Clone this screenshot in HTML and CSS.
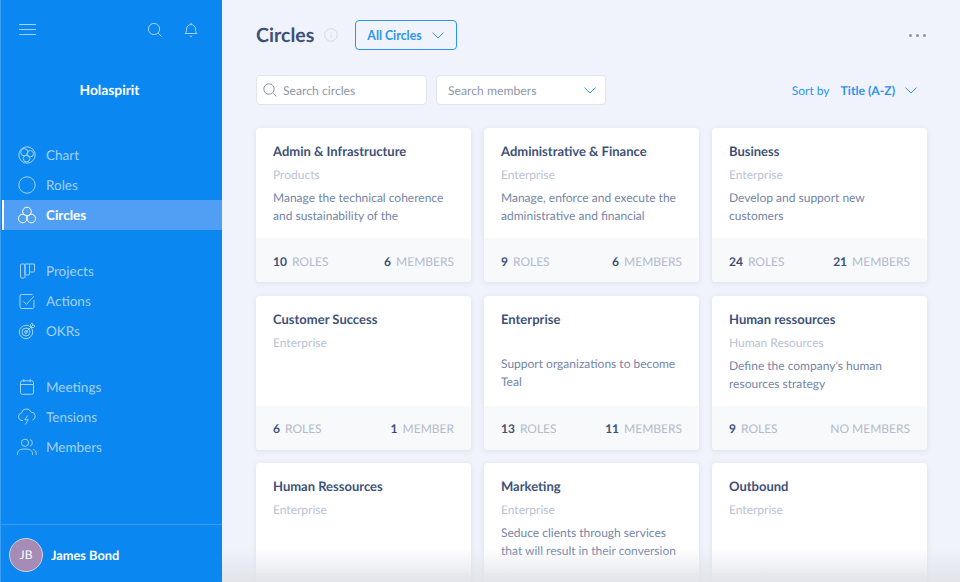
FILE: index.html
```html
<!DOCTYPE html>
<html lang="en">
<head>
<meta charset="utf-8">
<title>Circles</title>
<link rel="stylesheet" href="styles.css">
</head>
<body>
<div class="app">
  <aside class="sidebar">
    <div class="side-top">
      <svg class="ic-menu" width="18" height="12" viewBox="0 0 18 12"><path d="M0 .5h17M0 5.500h17M0 10.500h17"/></svg>
      <div class="side-tools">
        <svg width="16" height="16" viewBox="0 0 16 16"><circle cx="7" cy="7" r="5.600"/><path d="M11 11l3.600 3.600"/></svg>
        <svg width="14" height="16" viewBox="0 0 14 16"><path d="M1 11.500c1.200-1 1.500-2 1.500-4.500C2.500 4.500 4.500 2.500 7 2.500s4.500 2 4.500 4.500c0 2.500.3 3.500 1.500 4.500zM7 .8v1.700M5.800 14.300h2.400"/></svg>
      </div>
    </div>
    <div class="brand">Holaspirit</div>
    <nav class="nav">
      <div class="nav-group">
        <a class="nav-item"><svg width="20" height="20" viewBox="0 0 20 20"><circle cx="10" cy="10" r="8.200"/><circle cx="7.300" cy="7.200" r="3.600"/><circle cx="13.300" cy="8.700" r="3.200"/><circle cx="9.500" cy="13.600" r="3.300"/></svg>Chart</a>
        <a class="nav-item"><svg width="20" height="20" viewBox="0 0 20 20"><circle cx="10" cy="10" r="8.200"/></svg>Roles</a>
        <a class="nav-item active"><svg width="20" height="20" viewBox="0 0 20 20"><circle cx="10" cy="6.500" r="4.300"/><circle cx="5.700" cy="13.500" r="4.300"/><circle cx="14.300" cy="13.500" r="4.300"/></svg>Circles</a>
      </div>
      <div class="nav-group">
        <a class="nav-item"><svg width="20" height="20" viewBox="0 0 20 20"><rect x="3.500" y="3" width="4.500" height="14" rx="1"/><path d="M8 3h4.500v10a1 1 0 0 1-1 1h-2.500a1 1 0 0 1-1-1zM12.500 3h5v7a1 1 0 0 1-1 1h-3a1 1 0 0 1-1-1z"/></svg>Projects</a>
        <a class="nav-item"><svg width="20" height="20" viewBox="0 0 20 20"><path d="M17 9v7a1.500 1.500 0 0 1-1.500 1.500h-11a1.500 1.500 0 0 1-1.500-1.500v-11a1.500 1.500 0 0 1 1.500-1.500h11"/><path d="M6.500 10.500l3 2.800 7.500-8.300"/></svg>Actions</a>
        <a class="nav-item"><svg width="20" height="20" viewBox="0 0 20 20"><circle cx="9" cy="11" r="6.700"/><circle cx="9" cy="11" r="4"/><circle cx="9" cy="11" r="1.400"/><path d="M9 11l7-7M13.500 3.500l1.500-1.500 1 2 2 1-1.500 1.500h-2.500z"/></svg>OKRs</a>
      </div>
      <div class="nav-group">
        <a class="nav-item"><svg width="20" height="20" viewBox="0 0 20 20"><rect x="3.500" y="3.800" width="13" height="13.500" rx="2"/><path d="M3.500 7.500h13M6.800 2v3M13.200 2v3"/></svg>Meetings</a>
        <a class="nav-item"><svg width="20" height="20" viewBox="0 0 20 20"><path d="M6 13.500h-1a3.800 3.800 0 0 1-.5-7.500 5 5 0 0 1 9.600-.8 4 4 0 0 1 1.400 7.800"/><path d="M10.800 8.500l-3 4.200h3.500l-3 4.800"/></svg>Tensions</a>
        <a class="nav-item"><svg width="20" height="20" viewBox="0 0 20 20"><circle cx="8" cy="5.800" r="3.600"/><path d="M.5 18v-1.500c0-2.800 2.500-4.500 7.500-4.500s7.500 1.700 7.500 4.500v1.500M13 2.500a3.500 3.500 0 0 1 0 6.600M16 12.300c2 .6 3.200 2 3.200 4v1.700"/></svg>Members</a>
      </div>
    </nav>
    <div class="user">
      <span class="avatar">JB</span>
      <span class="user-name">James Bond</span>
    </div>
  </aside>

  <main class="main">
    <header class="head">
      <h1 class="title">Circles</h1>
      <svg class="info" width="14" height="14" viewBox="0 0 14 14"><circle cx="7" cy="7" r="6.300"/><path d="M7 6.300v3.600M7 4v.9"/></svg>
      <button class="filter">All Circles
        <svg width="12" height="7" viewBox="0 0 12 7"><path d="M.5.700L6 6l5.500-5.300"/></svg>
      </button>
      <div class="dots"><i></i><i></i><i></i></div>
    </header>

    <div class="toolbar">
      <div class="field search">
        <svg width="14" height="14" viewBox="0 0 14 14"><circle cx="6" cy="6" r="5.200"/><path d="M9.800 9.800l3.600 3.600"/></svg>
        <span>Search circles</span>
      </div>
      <div class="field members">
        <span>Search members</span>
        <svg width="12" height="7" viewBox="0 0 12 7"><path d="M.5.700L6 6l5.500-5.300"/></svg>
      </div>
      <div class="sort">
        <span class="sort-label">Sort by</span>
        <span class="sort-value">Title (A-Z)</span>
        <svg width="12" height="7" viewBox="0 0 12 7"><path d="M.5.700L6 6l5.500-5.300"/></svg>
      </div>
    </div>

    <section class="grid">
      <article class="card">
        <div class="body"><h2>Admin &amp; Infrastructure</h2><p class="parent">Products</p><p class="desc">Manage the technical coherence and sustainability of the</p></div>
        <div class="foot"><span><b>10</b>ROLES</span><span><b>6</b>MEMBERS</span></div>
      </article>
      <article class="card">
        <div class="body"><h2>Administrative &amp; Finance</h2><p class="parent">Enterprise</p><p class="desc">Manage, enforce and execute the administrative and financial</p></div>
        <div class="foot"><span><b>9</b>ROLES</span><span><b>6</b>MEMBERS</span></div>
      </article>
      <article class="card">
        <div class="body"><h2>Business</h2><p class="parent">Enterprise</p><p class="desc">Develop and support new customers</p></div>
        <div class="foot"><span><b>24</b>ROLES</span><span><b>21</b>MEMBERS</span></div>
      </article>
      <article class="card">
        <div class="body"><h2>Customer Success</h2><p class="parent">Enterprise</p></div>
        <div class="foot"><span><b>6</b>ROLES</span><span><b>1</b>MEMBER</span></div>
      </article>
      <article class="card">
        <div class="body"><h2>Enterprise</h2><p class="parent empty"></p><p class="desc">Support organizations to become Teal</p></div>
        <div class="foot"><span><b>13</b>ROLES</span><span><b>11</b>MEMBERS</span></div>
      </article>
      <article class="card">
        <div class="body"><h2>Human ressources</h2><p class="parent">Human Resources</p><p class="desc">Define the company's human resources strategy</p></div>
        <div class="foot"><span><b>9</b>ROLES</span><span>NO MEMBERS</span></div>
      </article>
      <article class="card">
        <div class="body"><h2>Human Ressources</h2><p class="parent">Enterprise</p></div>
        <div class="foot"></div>
      </article>
      <article class="card">
        <div class="body"><h2>Marketing</h2><p class="parent">Enterprise</p><p class="desc">Seduce clients through services that will result in their conversion</p></div>
        <div class="foot"></div>
      </article>
      <article class="card">
        <div class="body"><h2>Outbound</h2><p class="parent">Enterprise</p></div>
        <div class="foot"></div>
      </article>
    </section>
    <div class="fade"></div>
  </main>
</div>
</body>
</html>
```
FILE: styles.css
```css
* { box-sizing: border-box; }
html, body { margin: 0; height: 100%; overflow: hidden; }
body { font-family: Lato, sans-serif; background: #f0f3fb; color: #3d5176; text-rendering: geometricPrecision; }
svg { fill: none; stroke: currentColor; stroke-width: 1; flex: none; display: block; }

.app { display: flex; height: 582px; }

.sidebar {
  width: 222px; flex: none; height: 582px;
  background: #0a87f1; border-left: 1px solid #3b9ef3;
  display: flex; flex-direction: column; color: #a6d2fa;
}
.side-top { display: flex; justify-content: space-between; align-items: center; padding: 23px 24px 0 18px; height: 36px; }
.side-tools { display: flex; gap: 21px; align-items: center; }
.brand { margin-top: 36px; height: 36px; line-height: 36px; text-align: center; color: #fff; font-weight: 700; font-size: 13.800px; padding-right: 4px; }
.nav { margin-top: 32px; display: flex; flex-direction: column; gap: 26px; flex: 1; }
.nav-item { display: flex; align-items: center; height: 30px; padding-left: 16px; gap: 9px; font-size: 13.500px; color: #a6d2fa; }
.nav-item.active { background: #519ff5; color: #fff; font-weight: 700; border-left: 2px solid #fff; margin-left: 1px; padding-left: 13px; }
.user { height: 58px; border-top: 1px solid #3b9ef3; display: flex; align-items: center; padding: 2px 8px 0; gap: 8px; }
.avatar {
  width: 34px; height: 34px; border-radius: 50%; background: #a58bb5; border: 1px solid #d6cfe2;
  color: #fff; font-size: 12px; display: flex; align-items: center; justify-content: center;
}
.user-name { color: #fff; font-weight: 700; font-size: 12.800px; }

.main { flex: 1; min-width: 0; padding: 20px 33px 0 34px; position: relative; overflow: hidden; }
.head { display: flex; align-items: center; height: 30px; }
.title { margin: 0; font-size: 19.600px; font-weight: 700; color: #3d5176; }
.info { margin-left: 10px; color: #d3d9e7; }
.filter {
  margin-left: 17px; width: 102px; height: 30px; border: 1px solid #2b94f2; border-radius: 4px; background: transparent;
  font: 700 12.300px Lato, sans-serif; color: #2b94f2; display: flex; align-items: center; gap: 10px; padding: 0 0 0 11px;
}
.dots { margin-left: auto; margin-right: 1px; display: flex; gap: 4px; }
.dots i { width: 3px; height: 3px; border-radius: 50%; background: #8b93a8; }

.toolbar { display: flex; align-items: center; margin-top: 25px; height: 30px; }
.field {
  height: 30px; background: #fff; border: 1px solid #e0e4ee; border-radius: 4px; display: flex; align-items: center;
  font-size: 12.200px; color: #8e97ab;
}
.search { width: 171px; padding-left: 6px; gap: 6px; }
.search svg { color: #8e97ab; }
.members { width: 170px; margin-left: 9px; padding: 0 9px 0 11px; justify-content: space-between; }
.members svg { color: #2b94f2; }
.sort { margin-left: auto; margin-right: 10px; display: flex; align-items: center; color: #2b94f2; font-size: 12.200px; }
.sort-label { font-size: 12px; }
.sort-value { font-weight: 700; margin-left: 11px; margin-right: 10px; }

.grid { margin-top: 23px; display: grid; grid-template-columns: repeat(3, 215px); grid-auto-rows: 154px; gap: 13.500px 13px; }
.card { background: #fff; border-radius: 4px; box-shadow: 0 1px 5px rgba(120, 135, 175, .18); display: flex; flex-direction: column; overflow: hidden; }
.body { flex: 1; padding: 15px 17px 0; }
.body h2 { margin: 0; font-size: 13px; line-height: 17px; font-weight: 700; color: #3d5176; }
.parent { margin: 6px 0 0; font-size: 12px; line-height: 18px; color: #bac2d5; }
.parent.empty { height: 16px; }
.desc { margin: 5px 0 0; font-size: 12px; line-height: 18px; color: #7586a8; }
.foot { height: 44px; flex: none; background: #f8f9fa; display: flex; justify-content: space-between; align-items: center; padding: 2px 17px 0; font-size: 12px; color: #b3bbcf; }
.foot b { color: #3d5176; font-weight: 700; margin-right: 5px; }

.fade { position: absolute; left: 0; right: 0; bottom: 0; height: 34px; background: linear-gradient(rgba(240,243,251,0), rgba(224,226,232,.9)); }
```
